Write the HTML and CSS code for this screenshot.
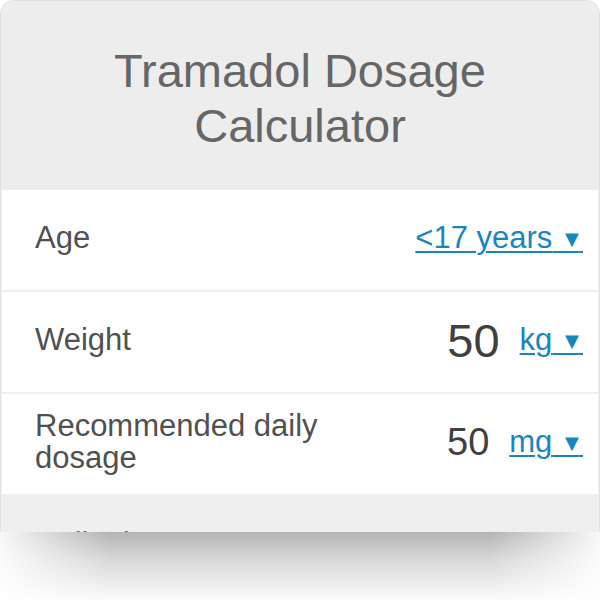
FILE: index.html
```html
<!DOCTYPE html>
<html lang="en">
<head>
    <meta charset="UTF-8">
    <meta name="viewport" content="width=device-width, initial-scale=1.0">
    <title>Tramadol Dosage Calculator</title>
    <link rel="stylesheet" href="styles.css">
</head>
<body>
    <div class="frame">
        <div class="calculator">
            <div class="calc-header">
                <h1>Tramadol Dosage Calculator</h1>
            </div>
            <div class="row">
                <span class="label">Age</span>
                <span class="field">
                    <a class="unit" href="#">&lt;17 years<span class="sp"> </span><span class="caret">&#9660;</span><span class="tail">&nbsp;</span></a>
                </span>
            </div>
            <div class="row">
                <span class="label">Weight</span>
                <span class="field">
                    <span class="value">50</span>
                    <a class="unit" href="#">kg<span class="sp"> </span><span class="caret">&#9660;</span><span class="tail">&nbsp;</span></a>
                </span>
            </div>
            <div class="row">
                <span class="label label-wrap">Recommended daily dosage</span>
                <span class="field">
                    <span class="value value-small">50</span>
                    <a class="unit" href="#">mg<span class="sp"> </span><span class="caret">&#9660;</span><span class="tail">&nbsp;</span></a>
                </span>
            </div>
            <div class="result">
                <span class="label">Daily dosage</span>
                <span class="result-value">50-100 mg</span>
            </div>
        </div>
    </div>
    <div class="shade"></div>
</body>
</html>
```

FILE: styles.css
```css
body {
    margin: 0;
    padding: 0;
    background-color: #fff;
    font-family: "Liberation Sans", Arial, sans-serif;
}
.frame {
    height: 532px;
    overflow: hidden;
}
.calculator {
    width: 596px;
    background: #efefef;
    border: 1px solid #e2e2e2;
    border-bottom: none;
    border-radius: 14px 14px 0 0;
    padding: 0 1px;
    min-height: 600px;
}
.calc-header {
    background: #ededed;
    border-radius: 13px 13px 0 0;
    margin: 0 -1px;
    padding: 42px 20px 37px;
    text-align: center;
}
h1 {
    margin: 0;
    font-size: 47px;
    line-height: 55px;
    font-weight: normal;
    color: #666;
}
.row {
    box-sizing: border-box;
    display: flex;
    justify-content: space-between;
    align-items: center;
    height: 100px;
    padding: 0 15px 4px 33px;
    margin-bottom: 2px;
    background: #fff;
}
.label {
    font-size: 31px;
    color: #505050;
}
.label-wrap {
    max-width: 300px;
    line-height: 32px;
}
.field {
    display: flex;
    align-items: center;
}
.value {
    font-size: 47px;
    color: #404040;
    margin-right: 20px;
}
.value-small {
    font-size: 38px;
}
.unit {
    font-size: 31px;
    color: #1a85bd;
    text-decoration: underline;
    text-decoration-thickness: 2px;
    text-underline-offset: 3px;
}
.sp {
    word-spacing: 4px;
}
.caret {
    font-family: "DejaVu Sans", sans-serif;
    font-size: 18px;
    vertical-align: 3px;
}
.tail {
    font-size: 15px;
}
.result {
    display: flex;
    padding: 30px 33px 0;
}
.result .label {
    color: #666;
}
.result-value {
    font-size: 31px;
    color: #666;
    margin-left: 19px;
}
.shade {
    height: 68px;
    background: linear-gradient(#b3b3b3, #d8d8d8 40%, #fbfbfb);
    -webkit-mask-image: linear-gradient(to right, rgba(0, 0, 0, 0.1), #000 110px, #000 490px, rgba(0, 0, 0, 0.1));
    mask-image: linear-gradient(to right, rgba(0, 0, 0, 0.1), #000 110px, #000 490px, rgba(0, 0, 0, 0.1));
}
```
